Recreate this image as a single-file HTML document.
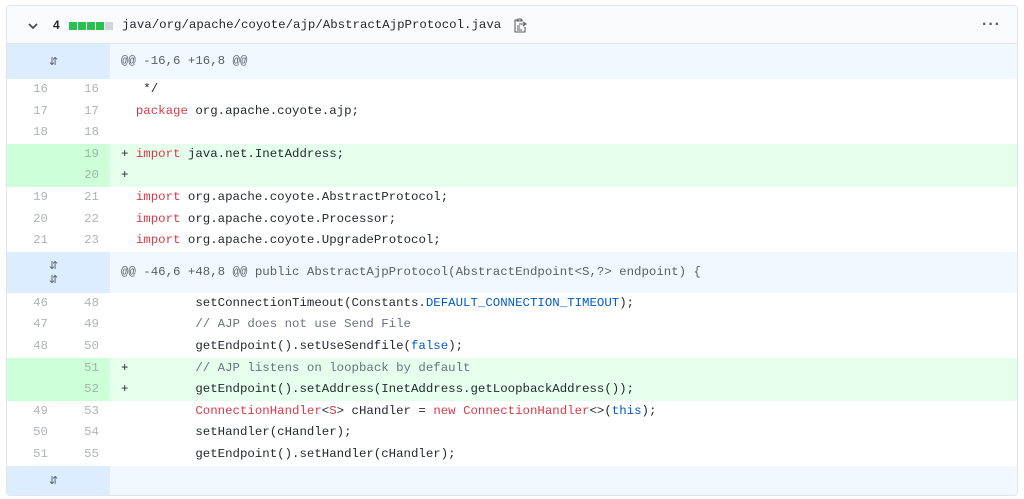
<!DOCTYPE html>
<html><head><style>
body{margin:0;background:#fff;width:1024px;height:499px;overflow:hidden;font-family:"Liberation Mono",monospace;font-size:12.4px;color:#24292e}
.box{position:absolute;left:6px;top:5px;width:1010px;height:489px;border:1px solid #e1e4e8;border-radius:4px;overflow:hidden}
.hdr{height:37px;background:#fafbfc;border-bottom:1px solid #e1e4e8;position:relative}
.row{position:relative;height:21.6px;line-height:21.6px;white-space:pre}
.n1,.n2{position:absolute;top:0;width:41px;text-align:right;color:#b0b4b8}
.n1{left:0}.n2{left:51px}
.num{position:absolute;left:0;top:0;bottom:0;width:103px}
.code{position:absolute;left:114px;top:0}
.add{background:#e6ffed}.add .num{background:#cdffd8}
.add .n2{color:#9cb8a2}
.hunk{position:relative;background:#f1f8ff;color:#586069}
.hunk .num{background:#dbedff}
.k{color:#d73a49}.c{color:#6a737d}.b{color:#005cc5}
.exp{position:absolute;left:42px;font-size:11px;color:#586069;font-family:"DejaVu Sans",sans-serif}
</style></head><body>
<div class="box">
<div class="hdr">
<svg style="position:absolute;left:21px;top:16px" width="10" height="8" viewBox="0 0 10 8"><path d="M1 2l4 4 4-4" stroke="#444d56" stroke-width="1.8" fill="none"/></svg>
<span style="position:absolute;left:46px;top:12px;font-family:'Liberation Sans',sans-serif;font-weight:bold;font-size:12px;color:#24292e">4</span>
<span style="position:absolute;left:62px;top:16px;width:8px;height:8px;background:#2cbe4e"></span>
<span style="position:absolute;left:71px;top:16px;width:8px;height:8px;background:#2cbe4e"></span>
<span style="position:absolute;left:80px;top:16px;width:8px;height:8px;background:#2cbe4e"></span>
<span style="position:absolute;left:89px;top:16px;width:8px;height:8px;background:#2cbe4e"></span>
<span style="position:absolute;left:98px;top:16px;width:8px;height:8px;background:#d1d5da"></span>
<span style="position:absolute;left:115px;top:12px;color:#24292e">java/org/apache/coyote/ajp/AbstractAjpProtocol.java</span>
<svg style="position:absolute;left:507px;top:12px" width="13" height="15" viewBox="0 0 13 15"><path d="M3 2H1v12h10V9M3 2h1V1h3v1h1v1H3zM5 6h7M9 4l3 2-3 2M3 8h3M3 10h3M3 12h5" stroke="#586069" stroke-width="1.1" fill="none"/></svg>
<span style="position:absolute;left:975px;top:10px;font-family:'Liberation Sans',sans-serif;font-size:16px;font-weight:bold;color:#586069;letter-spacing:1px">···</span>
</div>
<div class="hunk" style="height:35px;line-height:35px"><div class="num"><span class="exp" style="top:0">⇵</span></div><span class="code">@@ -16,6 +16,8 @@</span></div>
<div class="row"><span class="n1">16</span><span class="n2">16</span><span class="code">   */</span></div>
<div class="row"><span class="n1">17</span><span class="n2">17</span><span class="code">  <span class="k">package</span> org.apache.coyote.ajp;</span></div>
<div class="row"><span class="n1">18</span><span class="n2">18</span><span class="code"></span></div>
<div class="row add"><div class="num"></div><span class="n2">19</span><span class="code">+ <span class="k">import</span> java.net.InetAddress;</span></div>
<div class="row add"><div class="num"></div><span class="n2">20</span><span class="code">+</span></div>
<div class="row"><span class="n1">19</span><span class="n2">21</span><span class="code">  <span class="k">import</span> org.apache.coyote.AbstractProtocol;</span></div>
<div class="row"><span class="n1">20</span><span class="n2">22</span><span class="code">  <span class="k">import</span> org.apache.coyote.Processor;</span></div>
<div class="row"><span class="n1">21</span><span class="n2">23</span><span class="code">  <span class="k">import</span> org.apache.coyote.UpgradeProtocol;</span></div>
<div class="hunk" style="height:41px;line-height:41px"><div class="num"><span class="exp" style="top:-7px">⇵</span><span class="exp" style="top:7px">⇵</span></div><span class="code">@@ -46,6 +48,8 @@ public AbstractAjpProtocol(AbstractEndpoint&lt;S,?&gt; endpoint) {</span></div>
<div class="row"><span class="n1">46</span><span class="n2">48</span><span class="code">          setConnectionTimeout(Constants.<span class="b">DEFAULT_CONNECTION_TIMEOUT</span>);</span></div>
<div class="row"><span class="n1">47</span><span class="n2">49</span><span class="code">          <span class="c">// AJP does not use Send File</span></span></div>
<div class="row"><span class="n1">48</span><span class="n2">50</span><span class="code">          getEndpoint().setUseSendfile(<span class="b">false</span>);</span></div>
<div class="row add"><div class="num"></div><span class="n2">51</span><span class="code">+         <span class="c">// AJP listens on loopback by default</span></span></div>
<div class="row add"><div class="num"></div><span class="n2">52</span><span class="code">+         getEndpoint().setAddress(InetAddress.getLoopbackAddress());</span></div>
<div class="row"><span class="n1">49</span><span class="n2">53</span><span class="code">          <span class="k">ConnectionHandler</span>&lt;<span class="k">S</span>&gt; cHandler = <span class="k">new</span> <span class="k">ConnectionHandler</span>&lt;&gt;(<span class="b">this</span>);</span></div>
<div class="row"><span class="n1">50</span><span class="n2">54</span><span class="code">          setHandler(cHandler);</span></div>
<div class="row"><span class="n1">51</span><span class="n2">55</span><span class="code">          getEndpoint().setHandler(cHandler);</span></div>
<div class="hunk" style="height:30px;line-height:30px"><div class="num"><span class="exp">⇵</span></div></div>
</div>
</body></html>
